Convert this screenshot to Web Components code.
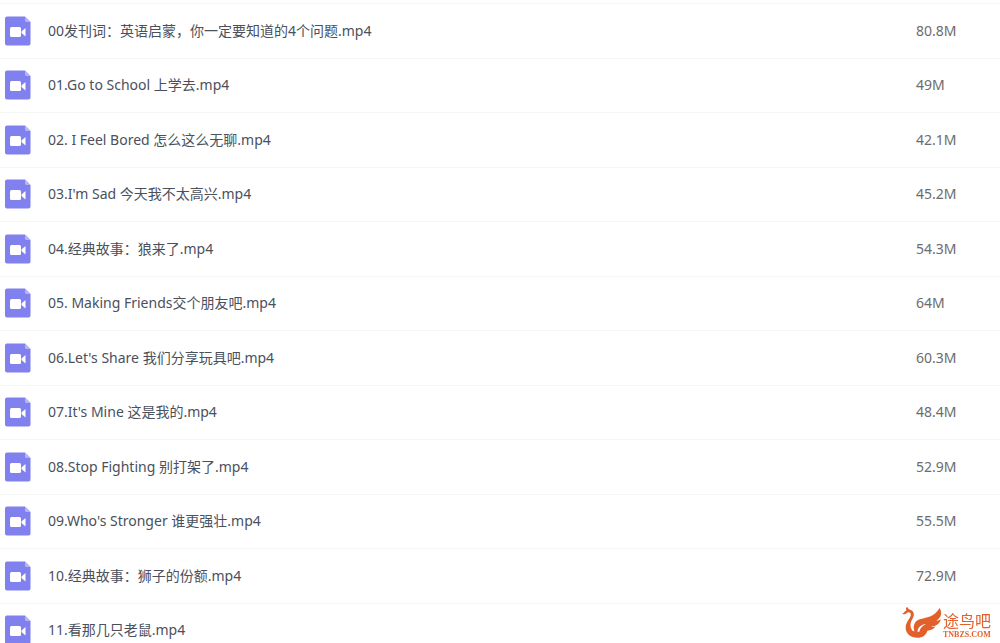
<!DOCTYPE html>
<html lang="zh-CN">
<head>
  <meta charset="UTF-8">
  <meta name="viewport" content="width=device-width, initial-scale=1.0">
  <title>英语启蒙</title>
  <style>
    html {
      scrollbar-width: none;
    }

    body {
      --c-text: #4a505c;
      --c-size: #6c6c6c;
      --c-line: #f5f5f6;
      --c-icon: #8080ee;
      --c-brand: #e2602c;

      margin: 0;
      background: #fff;
      font-family: "Noto Sans", "Noto Sans CJK SC", sans-serif;
      font-size: 14px;
      line-height: 20px;
    }
  </style>
</head>
<body>
  <file-list></file-list>
  <site-logo href="#">
    途鸟吧
    <span slot="domain">TNBZS.COM</span>
  </site-logo>

  <script>
    const files = [
      ["00发刊词：英语启蒙，你一定要知道的4个问题.mp4", "80.8M"],
      ["01.Go to School 上学去.mp4", "49M"],
      ["02. I Feel Bored 怎么这么无聊.mp4", "42.1M"],
      ["03.I'm Sad 今天我不太高兴.mp4", "45.2M"],
      ["04.经典故事：狼来了.mp4", "54.3M"],
      ["05. Making Friends交个朋友吧.mp4", "64M"],
      ["06.Let's Share 我们分享玩具吧.mp4", "60.3M"],
      ["07.It's Mine 这是我的.mp4", "48.4M"],
      ["08.Stop Fighting 别打架了.mp4", "52.9M"],
      ["09.Who's Stronger 谁更强壮.mp4", "55.5M"],
      ["10.经典故事：狮子的份额.mp4", "72.9M"],
      ["11.看那几只老鼠.mp4", ""],
    ];

    class VideoIcon extends HTMLElement {
      constructor() {
        super();
        this.attachShadow({ mode: "open" });
      }

      connectedCallback() {
        this.shadowRoot.innerHTML = `
          <style>
            :host {
              display: block;
              width: 26px;
              height: 30px;
            }

            svg {
              display: block;
              width: 100%;
              height: 100%;
            }
          </style>
          <svg viewBox="0 0 26 30" aria-hidden="true">
            <path fill="var(--c-icon)" d="M2 0.5H20L25.5 6V27.5a2 2 0 0 1-2 2H2a2 2 0 0 1-2-2V2.5a2 2 0 0 1 2-2Z"/>
            <path fill="#b4b4f6" d="M20 0.5L25.5 6H21.5A1.5 1.5 0 0 1 20 4.5Z"/>
            <rect x="5" y="11" width="11" height="10" rx="1.5" fill="#fff"/>
            <path fill="#fff" d="M16.5 15.5L20.5 12V20.5L16.5 17Z"/>
          </svg>
        `;
      }
    }

    class FileList extends HTMLElement {
      constructor() {
        super();
        this.attachShadow({ mode: "open" });
      }

      connectedCallback() {
        this.render();
      }

      render() {
        const rows = files.map(([name, size]) => `
          <tr>
            <td class="icon"><video-icon></video-icon></td>
            <td class="name"><a href="#">${name}</a></td>
            <td class="size">${size}</td>
          </tr>
        `).join("");

        this.shadowRoot.innerHTML = `
          <style>
            :host {
              display: block;
              padding-top: 3px;
            }

            table {
              width: 100%;
              height: calc(100vh + 11px);
              border-collapse: separate;
              border-spacing: 0;
              table-layout: fixed;
            }

            td {
              padding: 0;
              border-top: 1px solid var(--c-line);
              vertical-align: middle;
            }

            .icon {
              width: 43px;
              padding-left: 5px;
            }

            .name a {
              color: var(--c-text);
              text-decoration: none;
            }

            .name a:hover {
              color: var(--c-icon);
            }

            .size {
              width: 84px;
              color: var(--c-size);
            }
          </style>
          <table aria-label="文件">
            <tbody>${rows}</tbody>
          </table>
        `;
      }
    }

    class SiteLogo extends HTMLElement {
      constructor() {
        super();
        this.attachShadow({ mode: "open" });
      }

      connectedCallback() {
        this.shadowRoot.innerHTML = `
          <style>
            :host {
              position: fixed;
              right: 9px;
              bottom: 4px;
              display: block;
            }

            a {
              display: flex;
              align-items: flex-end;
              color: var(--c-brand);
              text-decoration: none;
            }

            svg {
              width: 41px;
              height: 33px;
            }

            .name {
              display: block;
              font: 16px/18px "Liberation Sans", "Noto Sans CJK SC", sans-serif;
            }

            .domain {
              display: block;
              font: bold 8px/8px "Liberation Serif", serif;
            }
          </style>
          <a href="${this.getAttribute("href") || "#"}">
            <svg viewBox="0 0 123 99" fill="currentColor" aria-hidden="true">
              <path d="M14 13C10 9 11 4 16 3C17 8 21 10 26 12C36 16 38 26 33 35C28 45 23 53 27 66C29 73 33 76 37 76C32 58 38 45 53 40C73 34 96 34 113 6C122 22 117 35 103 44C109 44 113 42 117 39C113 54 102 60 88 62C92 64 97 63 101 61C95 70 86 73 76 74C72 88 62 95 46 95C26 95 11 83 11 65C11 49 23 39 26 29C29 20 20 16 14 21C10 25 6 26 1 23C6 21 8 15 14 13Z"/>
              <path d="M46 77C48 63 58 56 72 54C61 60 54 67 52 77Z" fill="#fff"/>
            </svg>
            <span>
              <span class="name"><slot></slot></span>
              <span class="domain"><slot name="domain"></slot></span>
            </span>
          </a>
        `;
      }
    }

    customElements.define("video-icon", VideoIcon);
    customElements.define("file-list", FileList);
    customElements.define("site-logo", SiteLogo);
  </script>
</body>
</html>
